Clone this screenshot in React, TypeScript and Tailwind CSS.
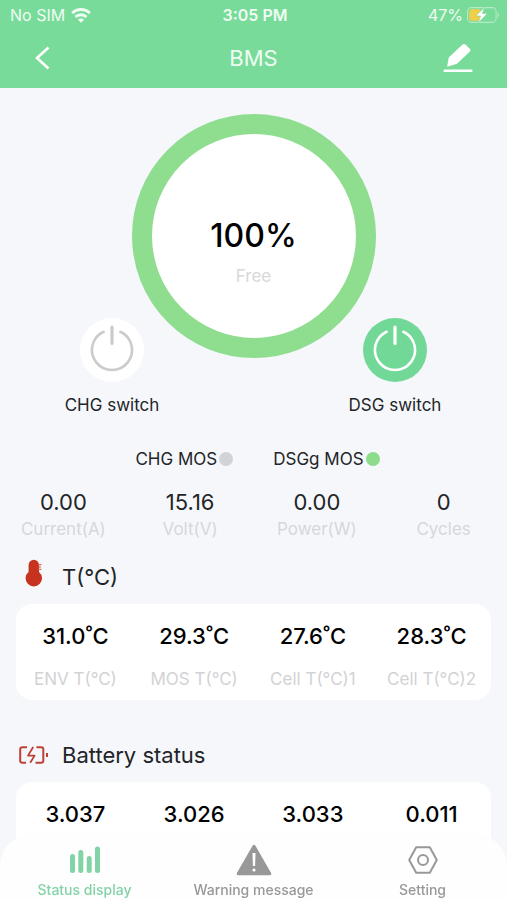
import React, { useState } from "react";

type Tab = "Status display" | "Warning message" | "Setting";

type Reading = {
  value: string;
  label?: string;
};

const stats: Reading[] = [
  { value: "0.00", label: "Current(A)" },
  { value: "15.16", label: "Volt(V)" },
  { value: "0.00", label: "Power(W)" },
  { value: "0", label: "Cycles" },
];

const temperatures: Reading[] = [
  { value: "31.0˚C", label: "ENV T(°C)" },
  { value: "29.3˚C", label: "MOS T(°C)" },
  { value: "27.6˚C", label: "Cell T(°C)1" },
  { value: "28.3˚C", label: "Cell T(°C)2" },
];

const battery: Reading[] = [
  { value: "3.037" },
  { value: "3.026" },
  { value: "3.033" },
  { value: "0.011" },
];

const WifiIcon = () => (
  <svg width="20" height="15" viewBox="0 0 20 15" fill="none" stroke="currentColor" strokeWidth="3">
    <path d="M1.2 5.2a12.6 12.6 0 0 1 17.6 0" />
    <path d="M4.5 9a7.9 7.9 0 0 1 11 0" />
    <path d="M10 14.8 6.9 11.7a4.4 4.4 0 0 1 6.2 0Z" fill="currentColor" stroke="none" />
  </svg>
);

const BatteryIcon = () => (
  <svg width="33" height="16" viewBox="0 0 33 16" fill="none">
    <rect x="0.6" y="0.6" width="28.5" height="14.8" rx="4" stroke="#b5ebc6" strokeWidth="1.1" />
    <path d="M30.7 5.5c1.6.6 1.6 4.4 0 5Z" fill="#b5ebc6" />
    <rect x="2.2" y="2.2" width="12" height="11.6" rx="2.5" fill="#efcf4a" />
    <path d="M17.8 0 8.8 9h4.8l-2.4 7 9.2-9.4h-5L17.8 0Z" fill="#fff" stroke="#78db9a" strokeWidth="0.6" />
  </svg>
);

const PowerIcon = () => (
  <svg width="46" height="50" viewBox="0 0 46 50" fill="none" stroke="currentColor" strokeWidth="2.6" strokeLinecap="round">
    <path d="M14.6 8.8a20 20 0 1 0 16.8 0" />
    <path d="M23 4v16.5" strokeWidth="3.2" />
  </svg>
);

const ThermometerIcon = () => (
  <svg width="18" height="28" viewBox="0 0 18 28" fill="#c8331f">
    <path d="M3.6 6a5.2 5.2 0 0 1 10.4 0v6.9a8.2 8.2 0 1 1-10.4 0Z" />
    <path d="M13.5 5.6h3M13.5 8h2.2M13.5 10.4h3" stroke="#d87263" strokeWidth="1.4" />
  </svg>
);

const ChargeIcon = () => (
  <svg width="30" height="18" viewBox="0 0 30 18" fill="none" stroke="#bf4037" strokeWidth="2" strokeLinejoin="round">
    <path d="M8 1.2H3.2a2 2 0 0 0-2 2v11.6a2 2 0 0 0 2 2H7" />
    <path d="M17.5 1.2h4.8a2 2 0 0 1 2 2v11.6a2 2 0 0 1-2 2h-5.8" />
    <path d="M14.2 1 9 9.6h6.6l-4.4 7.2" strokeWidth="1.8" />
    <path d="M28 7v4" strokeWidth="2" />
  </svg>
);

const StatusIcon = () => (
  <svg width="32" height="28" viewBox="0 0 32 28" stroke="currentColor" strokeWidth="5" strokeLinecap="round">
    <path d="M3.5 10.5v14M11.8 6.5v18M20.2 12.5v12M28.5 3v21.5" />
  </svg>
);

const WarningIcon = () => (
  <svg width="36" height="32" viewBox="0 0 36 32">
    <path
      d="M18 2.2 33.8 29.8H2.2Z"
      fill="currentColor"
      stroke="currentColor"
      strokeWidth="3"
      strokeLinejoin="round"
    />
    <path d="M16.5 9h3l-.4 13h-2.2Z" fill="#fff" />
    <circle cx="18" cy="26" r="1.6" fill="#fff" />
  </svg>
);

const SettingIcon = () => (
  <svg width="30" height="28" viewBox="0 0 30 28" fill="none" stroke="currentColor" strokeWidth="2" strokeLinejoin="round">
    <path d="M8.2 1.2h13.6L28.8 14l-7 12.8H8.2L1.2 14Z" />
    <circle cx="15" cy="14" r="5" />
  </svg>
);

const tabs: { name: Tab; icon: React.ReactNode }[] = [
  { name: "Status display", icon: <StatusIcon /> },
  { name: "Warning message", icon: <WarningIcon /> },
  { name: "Setting", icon: <SettingIcon /> },
];

const PowerSwitch = ({ label, on, onClick }: { label: string; on: boolean; onClick: () => void }) => (
  <div className="flex w-32 flex-col items-center gap-[11px]">
    <button
      type="button"
      aria-label={label}
      aria-pressed={on}
      onClick={onClick}
      className={`flex size-16 items-center justify-center rounded-full pb-1 ${
        on ? "bg-[#72d898] text-white" : "bg-white text-[#cbcbcb]"
      }`}
    >
      <PowerIcon />
    </button>
    <span className="text-[17px] leading-6">{label}</span>
  </div>
);

const Mos = ({ label, on }: { label: string; on: boolean }) => (
  <div className="flex items-center gap-[2px]">
    <span className="text-[17px] leading-6">{label}</span>
    <span className={`size-[14px] rounded-full ${on ? "bg-[#8cdc8c]" : "bg-[#d2d3d6]"}`}></span>
  </div>
);

const ReadingCard = ({ items }: { items: Reading[] }) => (
  <div className="mx-4 mt-[13px] grid min-h-24 grid-cols-4 rounded-2xl bg-white pt-[18px] pb-[9px] text-center">
    {items.map((item) => (
      <div key={item.value} className="flex flex-col gap-[17px]">
        <span className="text-[22px] leading-7 font-medium text-black">{item.value}</span>
        {item.label && <span className="text-[17px] leading-6 text-[#d2d2d4]">{item.label}</span>}
      </div>
    ))}
  </div>
);

const App = () => {
  const [chg, setChg] = useState(false);
  const [dsg, setDsg] = useState(true);
  const [activeTab, setActiveTab] = useState<Tab>("Status display");

  return (
    <div className="min-h-screen bg-[#f5f7fb] font-['Inter',sans-serif] text-[#232427]">
      <header className="bg-[#78db9a] pb-[10px] text-[#effcf3]">
        <div className="grid h-[30px] grid-cols-3 items-center pr-[7px] pl-[10px] text-[16px] leading-5">
          <div className="flex items-center gap-[6px]">
            <span>No SIM</span>
            <WifiIcon />
          </div>
          <span className="text-center font-semibold">3:05 PM</span>
          <div className="flex items-center justify-end gap-1">
            <span>47%</span>
            <BatteryIcon />
          </div>
        </div>
        <div className="grid h-12 grid-cols-3 items-center px-[34px] pt-[7px]">
          <button type="button" aria-label="Back" className="justify-self-start text-white">
            <svg width="16" height="24" viewBox="0 0 16 24" fill="none" stroke="currentColor" strokeWidth="2.6">
              <path d="M14.5 1.5 3 12l11.5 10.5" />
            </svg>
          </button>
          <h1 className="text-center text-[22px] leading-7">BMS</h1>
          <button type="button" aria-label="Edit" className="justify-self-end text-white">
            <svg width="30" height="30" viewBox="0 0 30 30" fill="currentColor">
              <path d="M19.6 1.6a2 2 0 0 1 2.8 0l4.4 4.2a2 2 0 0 1 .1 2.8L14 20.8 5.2 23.6a.7.7 0 0 1-.9-.9l1.4-8.2Z" />
              <rect x="0.5" y="26.6" width="29" height="2.4" rx="1" />
            </svg>
          </button>
        </div>
      </header>

      <main>
        <div className="flex justify-center pt-[26px]">
          <div className="flex size-[244px] flex-col items-center rounded-full border-[20px] border-[#8fdd8f] bg-white pt-[82px]">
            <span className="text-[32px] leading-10 font-medium text-black">100%</span>
            <span className="mt-2 text-[17px] leading-6 text-[#d8d8da]">Free</span>
          </div>
        </div>

        <div className="-mt-10 flex justify-between px-12">
          <PowerSwitch label="CHG switch" on={chg} onClick={() => setChg(!chg)} />
          <PowerSwitch label="DSG switch" on={dsg} onClick={() => setDsg(!dsg)} />
        </div>

        <div className="mt-[30px] flex justify-center gap-10 pl-2">
          <Mos label="CHG MOS" on={chg} />
          <Mos label="DSGg MOS" on={dsg} />
        </div>

        <div className="mt-[17px] grid grid-cols-4 text-center">
          {stats.map((item) => (
            <div key={item.label} className="flex flex-col gap-px">
              <span className="text-[22px] leading-7">{item.value}</span>
              <span className="text-[17px] leading-6 text-[#d6d7da]">{item.label}</span>
            </div>
          ))}
        </div>

        <section className="mt-[22px]">
          <div className="flex h-7 items-center gap-[19px] pl-[25px]">
            <span className="pb-2">
              <ThermometerIcon />
            </span>
            <h2 className="text-[22px] leading-7">T(°C)</h2>
          </div>
          <ReadingCard items={temperatures} />
        </section>

        <section className="mt-[41px]">
          <div className="flex h-7 items-center gap-[13px] pl-[19px]">
            <ChargeIcon />
            <h2 className="text-[22px] leading-7">Battery status</h2>
          </div>
          <ReadingCard items={battery} />
        </section>
      </main>

      <nav className="fixed inset-x-0 bottom-0 grid grid-cols-3 rounded-t-[32px] bg-[#fefefe]">
        {tabs.map((tab) => (
          <button
            key={tab.name}
            type="button"
            onClick={() => setActiveTab(tab.name)}
            className={`flex flex-col items-center pt-2 text-[14px] leading-5 font-medium ${
              activeTab === tab.name ? "text-[#82d3a5]" : "text-[#989898]"
            }`}
          >
            <span className="flex h-9 items-center">{tab.icon}</span>
            <span className="mt-[2px]">{tab.name}</span>
          </button>
        ))}
      </nav>
    </div>
  );
};

export default App;
